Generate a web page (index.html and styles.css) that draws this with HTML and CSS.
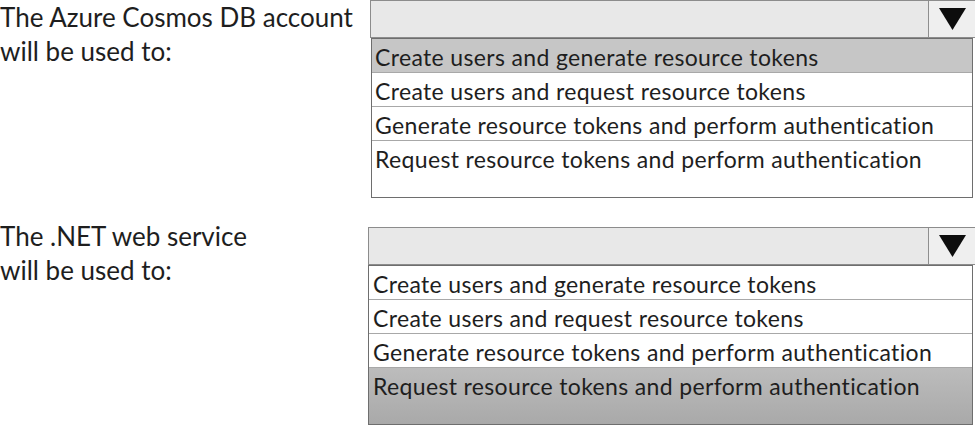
FILE: index.html
```html
<!DOCTYPE html>
<html lang="en">
<head>
<meta charset="utf-8">
<title>Answer area</title>
<link rel="stylesheet" href="styles.css">
</head>
<body>
<section class="question q1">
  <p class="label">The Azure Cosmos DB account<br>will be used to:</p>
  <div class="control">
    <div class="select">
      <span class="select-value"></span>
      <span class="select-btn"><svg class="arrow" width="27" height="22" viewBox="0 0 27 22"><polygon points="0,0 27,0 13.5,22" fill="#0d0d0d"/></svg></span>
    </div>
    <ul class="options">
      <li class="option selected">Create users and generate resource tokens</li>
      <li class="option">Create users and request resource tokens</li>
      <li class="option">Generate resource tokens and perform authentication</li>
      <li class="option last">Request resource tokens and perform authentication</li>
    </ul>
  </div>
</section>
<section class="question q2">
  <p class="label">The .NET web service<br>will be used to:</p>
  <div class="control">
    <div class="select">
      <span class="select-value"></span>
      <span class="select-btn"><svg class="arrow" width="27" height="22" viewBox="0 0 27 22"><polygon points="0,0 27,0 13.5,22" fill="#0d0d0d"/></svg></span>
    </div>
    <ul class="options">
      <li class="option">Create users and generate resource tokens</li>
      <li class="option">Create users and request resource tokens</li>
      <li class="option">Generate resource tokens and perform authentication</li>
      <li class="option last selected">Request resource tokens and perform authentication</li>
    </ul>
  </div>
</section>
</body>
</html>
```
FILE: styles.css
```css
html, body {
  margin: 0;
  padding: 0;
  background: #ffffff;
}
body {
  width: 975px;
  height: 425px;
  overflow: hidden;
  font-family: Lato, "Open Sans", sans-serif;
  color: #1e1e1e;
}
.question {
  display: grid;
  grid-template-columns: 370px 1fr;
  align-items: start;
}
.q2 {
  margin-top: 29px;
  grid-template-columns: 368px 1fr;
}
.label {
  margin: 0;
  font-size: 26px;
  line-height: 34px;
}
.q2 .label {
  margin-top: -8px;
}
.select {
  display: flex;
  height: 38px;
  box-sizing: border-box;
  border: 1px solid #8c8c8c;
  border-right: none;
  background: #e8e8e8;
}
.select-value {
  flex: 1;
}
.select-btn {
  width: 46px;
  border-left: 1px solid #8e8e8e;
  background: #efefef;
  display: flex;
  align-items: center;
  justify-content: center;
}
.arrow {
  display: block;
}
.options {
  list-style: none;
  margin: 0 2px 0 1px;
  padding: 0;
  height: 160px;
  box-sizing: border-box;
  border: 1px solid #6e6e6e;
  display: flex;
  flex-direction: column;
}
.q2 .options {
  margin-left: 0;
}
.option {
  height: 34px;
  flex: none;
  box-sizing: border-box;
  border-bottom: 1px solid #a8a8a8;
  padding: 4px 0 0 3px;
  font-size: 23px;
  letter-spacing: 0.35px;
  line-height: 29px;
  white-space: nowrap;
}
.q2 .option {
  padding-left: 4px;
}
.option.last {
  border-bottom: none;
}
.q1 .option.selected {
  background: #c6c6c6;
}
.q2 .option.last {
  flex: 1;
}
.q2 .option.selected {
  background: linear-gradient(#bcbcbc, #a9a9a9);
}
```
